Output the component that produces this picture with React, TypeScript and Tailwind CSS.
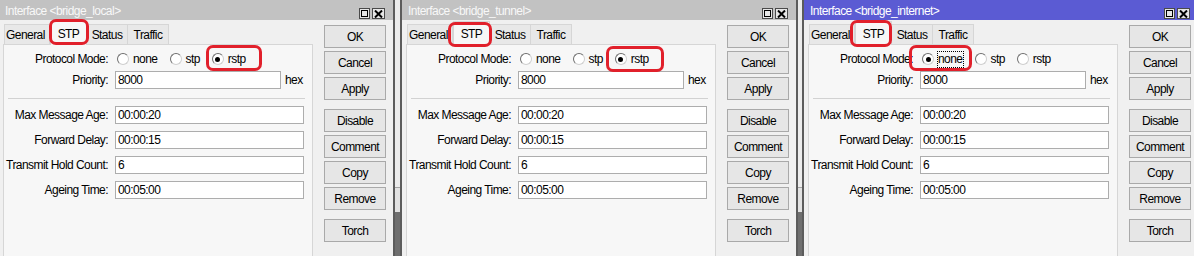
import React from 'react';

type Mode = 'none' | 'stp' | 'rstp';

type WinProps = {
  title: string;
  active?: boolean;
  mode: Mode;
  focus?: boolean;
  first?: boolean;
  marks: string[];
};

const buttons = [
  { label: 'OK', cls: 'border-[#1c1c1c]' },
  { label: 'Cancel', cls: '' },
  { label: 'Apply', cls: '' },
  { label: 'Disable', cls: 'mt-[6px]' },
  { label: 'Comment', cls: '' },
  { label: 'Copy', cls: '' },
  { label: 'Remove', cls: '' },
  { label: 'Torch', cls: 'mt-[6px]' },
];

const timers = [
  { label: 'Max Message Age:', value: '00:00:20' },
  { label: 'Forward Delay:', value: '00:00:15' },
  { label: 'Transmit Hold Count:', value: '6' },
  { label: 'Ageing Time:', value: '00:05:00' },
];

function Radio({ checked }: { checked: boolean }) {
  return (
    <span className="w-[12px] h-[12px] rounded-full bg-white border border-[#6e6e6e] border-r-[#cfcfcf] border-b-[#cfcfcf] flex items-center justify-center shrink-0">
      {checked && <span className="w-[5px] h-[5px] rounded-full bg-black" />}
    </span>
  );
}

function Row({ label, children, className = '' }: { label: string; children: React.ReactNode; className?: string }) {
  return (
    <div className={`flex items-center h-[18px] gap-[7px] ${className}`}>
      <span className="w-[104px] text-right whitespace-nowrap shrink-0">{label}</span>
      {children}
    </div>
  );
}

function Field({ value, wide = true }: { value: string; wide?: boolean }) {
  return (
    <div className={`${wide ? 'w-[189px]' : 'w-[166px]'} h-[18px] bg-white border border-[#adadad] pl-[2px] flex items-center`}>
      {value}
    </div>
  );
}

function Win({ title, active, mode, focus, first, marks }: WinProps) {
  const modes: Mode[] = ['none', 'stp', 'rstp'];
  return (
    <div
      className={`relative shrink-0 w-[398px] h-[256px] overflow-hidden bg-[#f0f0f0] border-x-2 border-[#5c5c5c] flex flex-col ${
        first ? '-ml-[3px]' : ''
      }`}
    >
      {/* Title bar */}
      <div
        className={`h-[20px] shrink-0 flex justify-between pl-[6px] pr-[8px] ${
          active ? 'bg-[#5b5bd3] text-white' : 'bg-[#c2c2c2] text-[#f8f8f8]'
        }`}
      >
        <span className="self-center pt-[1px] leading-[14px]">Interface &lt;{title}&gt;</span>
        <div className="self-end mb-[1px] flex gap-[2px]">
          <span className="w-[11px] h-[11px] border border-[#4a4a4a] bg-[#e6e6e6] flex items-center justify-center">
            <span className="w-[7px] h-[7px] border border-black" />
          </span>
          <span className="w-[13px] h-[11px] border border-[#4a4a4a] bg-[#e6e6e6] flex items-center justify-center">
            <svg width="9" height="8" viewBox="0 0 9 8">
              <path d="M1 0.5 L8 7.5 M8 0.5 L1 7.5" stroke="#000" strokeWidth="2" />
            </svg>
          </span>
        </div>
      </div>

      {/* Body */}
      <div className="flex pl-[4px] pr-[7px] gap-[11px]">
        <div className="w-[310px] flex flex-col shrink-0">
          {/* Tabs */}
          <div className="h-[24px] flex items-end pl-[1px] relative z-10">
            <span className="w-[46px] h-[20px] border border-b-0 border-[#d6d6d6] bg-[#e8e8e8] flex items-center pl-[1px]">
              General
            </span>
            <span className="w-[37px] h-[24px] -mb-px border border-b-0 border-[#d6d6d6] bg-[#f7f7f7] flex items-center justify-center">
              STP
            </span>
            <span className="w-[41px] h-[20px] border border-b-0 border-l-0 border-[#d6d6d6] bg-[#e8e8e8] flex items-center justify-center">
              Status
            </span>
            <span className="w-[41px] h-[20px] border border-b-0 border-l-0 border-[#d6d6d6] bg-[#e8e8e8] flex items-center justify-center">
              Traffic
            </span>
          </div>

          {/* Panel */}
          <div className="h-[230px] shrink-0 border border-[#d6d6d6] bg-[#f7f7f7] pt-[5px]">
            <Row label="Protocol Mode:">
              <div className="flex items-center gap-[12px] pl-[2px]">
                {modes.map((m) => (
                  <span key={m} className="flex items-center gap-[4px]">
                    <Radio checked={mode === m} />
                    <span
                      className={
                        focus && m === mode ? 'border border-dotted border-black leading-[15px] -mx-px' : ''
                      }
                    >
                      {m}
                    </span>
                  </span>
                ))}
              </div>
            </Row>
            <Row label="Priority:" className="mt-[3px]">
              <Field value="8000" wide={false} />
              <span className="-ml-[3px]">hex</span>
            </Row>
            <div className="mt-[9px] ml-[4px] mr-[7px] h-px bg-[#d2d2d2]" />
            <div className="mt-[7px] flex flex-col gap-[7px]">
              {timers.map((t) => (
                <Row key={t.label} label={t.label}>
                  <Field value={t.value} />
                </Row>
              ))}
            </div>
          </div>
        </div>

        {/* Buttons */}
        <div className="w-[62px] pt-[5px] flex flex-col gap-[3px] shrink-0">
          {buttons.map((b) => (
            <div
              key={b.label}
              className={`h-[23px] border border-[#a9a9a9] bg-[#e6e6e6] flex items-center justify-center ${b.cls}`}
            >
              {b.label}
            </div>
          ))}
        </div>
      </div>

      {/* Red annotation marks */}
      {marks.map((m) => (
        <div key={m} className={`absolute border-[3px] border-[#e1202b] rounded-[7px] z-20 ${m}`} />
      ))}
    </div>
  );
}

function Gap({ wide }: { wide?: boolean }) {
  return (
    <div className={`${wide ? 'w-[5px]' : 'w-[4px]'} h-[256px] shrink-0 flex flex-col`}>
      <div className="h-[187px] bg-[#ececec]" />
      <div className="h-px bg-[#a3a3a3]" />
      <div className="h-[24px] bg-[#e2e2e2]" />
      <div className="flex-1 bg-[#6f6f6f]" />
    </div>
  );
}

export default function App() {
  return (
    <div className="w-[1194px] h-[256px] overflow-hidden flex bg-[#6f6f6f] font-['Liberation_Sans',Arial,sans-serif] text-[12px] tracking-[-0.55px] text-black leading-[14px]">
      <Win
        first
        title="bridge_local"
        mode="rstp"
        marks={['left-[50px] top-[19px] w-[40px] h-[26px]', 'left-[207px] top-[45px] w-[56px] h-[26px]']}
      />
      <Gap wide />
      <Win
        title="bridge_tunnel"
        mode="rstp"
        marks={['left-[46px] top-[22px] w-[44px] h-[25px]', 'left-[204px] top-[46px] w-[58px] h-[26px]']}
      />
      <Gap />
      <Win
        active
        focus
        title="bridge_internet"
        mode="none"
        marks={['left-[46px] top-[20px] w-[42px] h-[27px]', 'left-[105px] top-[45px] w-[63px] h-[26px]']}
      />
    </div>
  );
}
